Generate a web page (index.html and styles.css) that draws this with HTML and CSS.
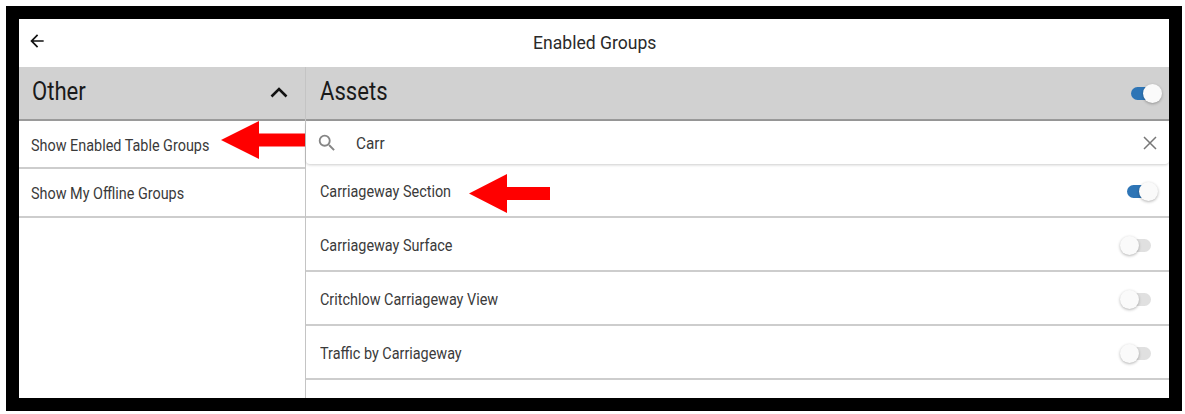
FILE: index.html
```html
<!DOCTYPE html>
<html lang="en">

<head>
    <meta charset="UTF-8">
    <meta name="viewport" content="width=device-width, initial-scale=1.0">
    <title>Enabled Groups</title>
    <link rel="stylesheet" href="styles.css">
</head>

<body>

    <div class="frame">
        <header class="topbar">
            <svg class="back-icon" viewBox="0 0 24 24" width="20" height="20">
                <path d="M20 11H7.83l5.59-5.59L12 4l-8 8 8 8 1.41-1.41L7.83 13H20v-2z" />
            </svg>
            <h1>Enabled Groups</h1>
        </header>

        <div class="columns">
            <div class="col-left">
                <div class="band">
                    <h2>Other</h2>
                    <svg class="chevron" viewBox="0 0 20 12" width="20" height="12">
                        <path d="M2.5 10.5 10 3l7.5 7.5" />
                    </svg>
                </div>
                <div class="menu-row first">
                    <span>Show Enabled Table Groups</span>
                    <svg class="arrow arrow-menu" viewBox="0 0 84 38" width="84" height="38">
                        <polygon points="0,19 38,0 38,12.5 84,12.5 84,25.5 38,25.5 38,38" />
                    </svg>
                </div>
                <div class="menu-row second"><span>Show My Offline Groups</span></div>
            </div>

            <div class="col-right">
                <div class="band">
                    <h2>Assets</h2>
                    <div class="switch on band-switch"><i></i></div>
                </div>
                <div class="search">
                    <svg class="search-icon" viewBox="0 0 24 24" width="22" height="22">
                        <path d="M15.5 14h-.79l-.28-.27A6.47 6.47 0 0 0 16 9.5 6.5 6.5 0 1 0 9.5 16c1.61 0 3.09-.59 4.23-1.57l.27.28v.79l5 4.99L20.49 19l-4.99-5zm-6 0C7.01 14 5 11.99 5 9.5S7.01 5 9.5 5 14 7.01 14 9.5 11.99 14 9.5 14z" />
                    </svg>
                    <span class="search-text"><b>Carr</b></span>
                    <svg class="clear-icon" viewBox="0 0 14 14" width="14" height="14">
                        <path d="M1 1l12 12M13 1 1 13" />
                    </svg>
                </div>
                <div class="group-row first">
                    <span>Carriageway Section</span>
                    <svg class="arrow arrow-row" viewBox="0 0 81 39" width="81" height="39">
                        <polygon points="0,19.5 38,0 38,13 81,13 81,26 38,26 38,39" />
                    </svg>
                    <div class="switch on"><i></i></div>
                </div>
                <div class="group-row">
                    <span>Carriageway Surface</span>
                    <div class="switch"><i></i></div>
                </div>
                <div class="group-row">
                    <span>Critchlow Carriageway View</span>
                    <div class="switch"><i></i></div>
                </div>
                <div class="group-row">
                    <span>Traffic by Carriageway</span>
                    <div class="switch"><i></i></div>
                </div>
            </div>
        </div>
    </div>

</body>

</html>
```

FILE: styles.css
```css
/* Global Styling */
* {
    box-sizing: border-box;
}

body {
    font-family: 'Roboto', 'Liberation Sans', sans-serif;
    margin: 0;
    padding: 6px 3px 3px 6px;
    background-color: #fff;
    color: #3a3a3a;
}

.frame {
    width: 1176px;
    height: 405px;
    border: solid #000;
    border-width: 13px;
    background-color: #fff;
    overflow: hidden;
}

/* Top bar */
.topbar {
    height: 48px;
    display: flex;
    align-items: center;
    justify-content: center;
    position: relative;
}

.topbar h1 {
    margin: 0 0 2px 2px;
    font-size: 19px;
    font-weight: 400;
    color: #2a2a2a;
    transform: scaleX(0.925);
}

.back-icon {
    position: absolute;
    left: 8px;
    top: 12px;
    fill: #111;
}

/* Columns */
.columns {
    display: flex;
}

.col-left {
    width: 287px;
    flex-shrink: 0;
    border-right: 1px solid #c4c4c4;
    height: 331px;
}

.col-right {
    flex: 1;
    height: 331px;
}

.band {
    height: 54px;
    background-color: #d1d1d1;
    border-bottom: 2px solid #9a9a9a;
    display: flex;
    align-items: center;
    justify-content: space-between;
}

.col-left .band {
    padding: 0 16px 0 13px;
}

.col-right .band {
    padding: 0 0 0 14px;
}

.band h2 {
    margin: 0 0 4px;
    font-size: 26px;
    font-weight: 400;
    color: #1a1a1a;
    transform: scaleX(0.85);
    transform-origin: left center;
}

.chevron {
    fill: none;
    stroke: #111;
    stroke-width: 2.6;
    margin-bottom: 2px;
}

/* Left menu */
.menu-row {
    height: 48px;
    display: flex;
    align-items: center;
    padding: 2px 0 0 12px;
    border-bottom: 2px solid #cdcdcd;
    font-size: 16px;
    position: relative;
}

.menu-row.second {
    height: 49px;
}

.menu-row span,
.group-row span {
    transform: scaleX(0.9);
    transform-origin: left center;
}

.arrow {
    position: absolute;
    fill: #f00;
}

.arrow-menu {
    left: 202px;
    top: 0;
}

.arrow-row {
    left: 163px;
    top: 10px;
}

/* Search */
.search {
    height: 43px;
    display: flex;
    align-items: center;
    padding: 0 12px 0 10px;
    border-radius: 4px;
    box-shadow: 0 1px 3px rgba(0, 0, 0, 0.2);
    position: relative;
}

.search-icon {
    fill: #858585;
}

.search-text {
    flex: 1;
    margin-left: 18px;
    font-size: 17px;
}

.search-text b {
    display: inline-block;
    font-weight: 400;
    transform: scaleX(0.9);
    transform-origin: left center;
}

.clear-icon {
    fill: none;
    stroke: #777;
    stroke-width: 1.5;
}

/* Group rows */
.group-row {
    height: 54px;
    display: flex;
    align-items: center;
    justify-content: space-between;
    padding: 3px 18px 0 14px;
    border-bottom: 2px solid #cdcdcd;
    font-size: 16px;
    position: relative;
}

.group-row.first {
    padding: 2px 13px 0 14px;
}

/* Toggle */
.switch {
    width: 29px;
    height: 13px;
    border-radius: 7px;
    background-color: #e0e0e0;
    position: relative;
}

.switch i {
    position: absolute;
    left: -2px;
    top: -3px;
    width: 19px;
    height: 19px;
    border-radius: 50%;
    background-color: #fafafa;
    box-shadow: 0 1px 3px rgba(0, 0, 0, 0.3);
}

.switch.on {
    background-color: #2e75b6;
}

.switch.on i {
    left: 12px;
}

.band-switch {
    margin-right: 9px;
}
```
